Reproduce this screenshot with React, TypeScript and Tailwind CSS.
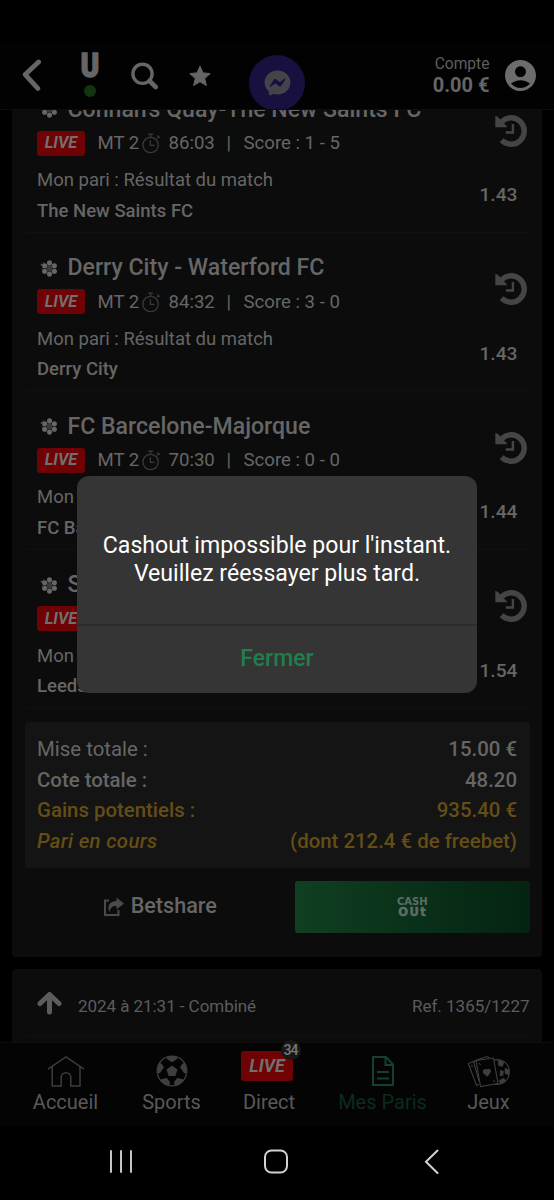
import type { ReactNode } from "react";

type Bet = { title: string; time: string; score: string; pick: string; odds: string };

const bets: Bet[] = [
  { title: "Connah's Quay-The New Saints FC", time: "86:03", score: "1 - 5", pick: "The New Saints FC", odds: "1.43" },
  { title: "Derry City - Waterford FC", time: "84:32", score: "3 - 0", pick: "Derry City", odds: "1.43" },
  { title: "FC Barcelone-Majorque", time: "70:30", score: "0 - 0", pick: "FC Barcelone", odds: "1.44" },
  { title: "Southampton-Leeds", time: "68:12", score: "0 - 1", pick: "Leeds", odds: "1.54" },
];

function BallIcon() {
  const dots = [0, 60, 120, 180, 240, 300].map((a) => {
    const r = ((a - 90) * Math.PI) / 180;
    return [9.5 + 5.6 * Math.cos(r), 8.5 + 5.6 * Math.sin(r)];
  });
  return (
    <svg className="block h-[17px] w-[18px]" viewBox="0 0 18 17">
      {dots.map(([x, y], i) => (
        <circle key={i} cx={x} cy={y} r="2.55" fill="#666" />
      ))}
      <circle cx="9.5" cy="8.5" r="3" fill="#3a3a3a" />
      <circle cx="1.6" cy="4.8" r="1" fill="#555" />
      <circle cx="3.6" cy="3.2" r="0.9" fill="#444" />
      <circle cx="2.4" cy="9" r="0.8" fill="#3a3a3a" />
    </svg>
  );
}

function StopwatchIcon() {
  return (
    <svg className="block h-[21px] w-[19px]" viewBox="0 0 19 21" fill="none" stroke="#3a3a3a" strokeWidth="1.3">
      <circle cx="8.6" cy="12" r="7.7" />
      <path d="M6 1.2h5.2M8.6 1.2v3M15 5.2l1.6-1.6M15.4 2.6l2.4 2.2M8.4 7.2v5.2h4.2" />
    </svg>
  );
}

function HistoryIcon() {
  return (
    <svg className="block h-[33px] w-[33px]" viewBox="0 0 33 33" fill="none">
      <path d="M6.8 7.6A13.2 13.2 0 1 1 6.6 26.200" stroke="#454545" strokeWidth="5.400" />
      <path d="M0.300 1.800L3 3l9 9.400V13.300H0.300Z" fill="#454545" />
      <path d="M17.900 10v8.500H10.800" stroke="#454545" strokeWidth="2.400" />
    </svg>
  );
}

function LiveBadge() {
  return (
    <span className="flex h-[25px] w-12 shrink-0 items-center justify-center rounded-[3px] bg-[#6e0204] text-[16.3px] font-bold italic leading-none text-[#707070]">
      LIVE
    </span>
  );
}

function BetItem({ bet }: { bet: Bet }) {
  return (
    <article className="flex h-[158.5px] justify-between border-b border-[#101010] pl-[12.5px]">
      <div className="pt-[20.6px]">
        <h2 className="flex h-[30px] items-center whitespace-nowrap text-[23.1px] font-medium leading-[30px]">
          <span className="ml-[3px] mr-[9.5px]">
            <BallIcon />
          </span>
          {bet.title}
        </h2>
        <div className="mt-[5.6px] flex h-[26px] items-center whitespace-nowrap text-[18.6px] leading-[26px]">
          <LiveBadge />
          <span className="ml-[12.5px] w-[44.5px]">MT 2</span>
          <span className="w-[26.5px] pt-[1px]">
            <StopwatchIcon />
          </span>
          <span className="w-[58px]">{bet.time}</span>
          <span className="w-[17px]">|</span>
          <span>Score : {bet.score}</span>
        </div>
        <p className="mt-[9px] text-[18.5px] leading-[30.7px]">Mon pari : Résultat du match</p>
        <p className="text-[18.5px] font-medium leading-[30.7px]">{bet.pick}</p>
      </div>
      <div className="flex flex-col items-end pr-[2px] pt-[39.5px]">
        <HistoryIcon />
        <span className="mr-[10px] mt-[33.7px] text-[19.2px] font-medium leading-[30px]">{bet.odds}</span>
      </div>
    </article>
  );
}

function SummaryRow({ label, value, className }: { label: string; value: string; className: string }) {
  return (
    <div className={`flex justify-between text-[20.4px] leading-[30.5px] ${className}`}>
      <span>{label}</span>
      <span className="font-medium not-italic tracking-normal">{value}</span>
    </div>
  );
}

function Header() {
  return (
    <header className="flex h-[68px] shrink-0 items-start overflow-hidden border-b border-[#0d0d0d] bg-[#020202] pl-[22px]">
      <svg className="mt-[17px] h-[33px] w-5" viewBox="0 0 20 33" fill="none" stroke="#666" strokeWidth="4.8" strokeLinecap="round" strokeLinejoin="round">
        <path d="M16.6 3L3.2 15.6L15.8 29.4" />
      </svg>
      <div className="ml-[33px] flex w-[30px] flex-col items-center pt-[7px]">
        <span className="scale-x-[0.84] text-[33px] font-black leading-[34px] text-[#666] [-webkit-text-stroke:1.600px_#666]">U</span>
        <span className="mt-[2px] size-[12px] rounded-full bg-[#11360f]" />
      </div>
      <svg className="ml-[25px] mt-[19px] h-[30px] w-[30px]" viewBox="0 0 30 30" fill="none" stroke="#666">
        <circle cx="12.500" cy="12.800" r="9.600" strokeWidth="3.400" />
        <path d="M19.500 19.800L25.700 26" strokeWidth="4.600" strokeLinecap="round" />
      </svg>
      <svg className="ml-[28px] mt-[22px] h-[24px] w-[24px]" viewBox="0 0 24 24">
        <path d="M12 2.200l3 6.700 7.200.7-5.500 4.800 1.700 7.100L12 17.800l-6.400 3.700 1.700-7.100L1.800 9.600 9 8.900z" fill="#666" stroke="#666" strokeWidth="1" strokeLinejoin="round" />
      </svg>
      <div className="ml-[37px] mt-[13px] flex size-14 shrink-0 items-center justify-center rounded-full bg-[#18103f]">
        <svg className="h-[26px] w-[27px]" viewBox="0 0 27 26">
          <path d="M13.5.6C6.2.6.6 5.9.6 12.5c0 3.500 1.500 6.500 3.800 8.600.3.300.4.600.4.900l.1 2.300c0 .8.8 1.300 1.500 1l2.500-1.100c.2-.1.500-.1.700-.1 1.200.3 2.500.5 3.900.5 7.300 0 12.900-5.300 12.900-12S20.800.6 13.500.6z" fill="#45434a" />
          <path d="M5.800 16l3.800-6c.6-1 1.900-1.200 2.800-.5l3 2.300c.3.200.6.200.9 0l4.100-3.100c.5-.4 1.300.2.9.8l-3.800 6c-.6 1-1.900 1.200-2.800.5l-3-2.300c-.3-.2-.6-.2-.9 0l-4.100 3.100c-.5.4-1.300-.2-.9-.8z" fill="#18103f" />
        </svg>
      </div>
      <div className="ml-auto mr-[15.500px] pt-[11.500px] text-right">
        <p className="text-[15.600px] leading-[20px] text-[#5e5e5e]">Compte</p>
        <p className="text-[20px] font-bold leading-[22px] text-[#666]">0.00 €</p>
      </div>
      <svg className="mr-[18px] mt-[18px] size-[31px]" viewBox="2 2 20 20" fill="#6c6c6c">
        <path d="M12 2C6.480 2 2 6.480 2 12s4.480 10 10 10 10-4.480 10-10S17.520 2 12 2zm0 4c1.930 0 3.500 1.570 3.500 3.500S13.930 13 12 13s-3.500-1.570-3.500-3.500S10.070 6 12 6zm0 14c-2.030 0-4.430-.82-6.140-2.880C7.550 15.800 9.680 15 12 15s4.450.8 6.140 2.120C16.430 19.180 14.030 20 12 20z" />
      </svg>
    </header>
  );
}

function Tab({ label, width, children, className = "" }: { label: string; width: string; children: ReactNode; className?: string }) {
  return (
    <div className={`flex flex-col items-center ${width} ${className}`}>
      <div className="flex h-[46px] items-end justify-center">{children}</div>
      <span className="whitespace-nowrap text-[20px] leading-[27px]">{label}</span>
    </div>
  );
}

function BottomNav() {
  return (
    <nav className="flex h-[84px] shrink-0 border-t border-[#0d0d0d] bg-[#040404] pl-3 text-[#595959]">
      <Tab label="Accueil" width="w-[107px]">
        <svg className="mb-[2px] h-[32px] w-[38px]" viewBox="0 0 38 32" fill="none" stroke="#3d3d3d" strokeWidth="1.500">
          <path d="M1 14.200L19 2l18 12.200M5.200 11.500V31h9V22.500a4.800 4.800 0 0 1 9.600 0V31h9.200V11.500" />
        </svg>
      </Tab>
      <Tab label="Sports" width="w-[105px]">
        <svg className="mb-[2px] size-[32px]" viewBox="0 0 32 32">
          <defs>
            <clipPath id="ball">
              <circle cx="16" cy="16" r="15" />
            </clipPath>
          </defs>
          <g clipPath="url(#ball)" fill="#3f3f3f">
            <path d="M16 10.500l5.500 4-2.100 6.400h-6.800l-2.100-6.400z" />
            <path d="M9.500 0h13l-1.700 4.200L16 7.200l-4.800-3zM0 7.500l5.500 1 2.500 3.700-4 5.800L0 19zM32 7.500l-5.500 1-2.500 3.700 4 5.800 4 1zM4.500 24.500l6-1.500 3.500 4-1 5H6zM27.500 24.500l-6-1.500-3.500 4 1 5h7z" />
          </g>
          <circle cx="16" cy="16" r="14.800" fill="none" stroke="#3f3f3f" strokeWidth="1.300" />
        </svg>
      </Tab>
      <Tab label="Direct" width="w-[90px]">
        <div className="relative mb-[8px] mr-1 flex h-[30px] w-[52px] items-center justify-center rounded-[3px] bg-[#6e0204] text-[17.800px] font-bold italic text-[#707070]">
          LIVE
          <span className="absolute -right-[8px] -top-[11px] flex size-[20px] items-center justify-center rounded-full bg-[#171717] pr-px text-[14px] font-medium not-italic leading-none tracking-[-0.900px] text-[#777]">
            34
          </span>
        </div>
      </Tab>
      <Tab label="Mes Paris" width="w-[137px]" className="text-[#0b2c1b]">
        <svg className="mb-[2px] h-[32px] w-[24px]" viewBox="0 0 24 32" fill="none" stroke="#173f2d" strokeWidth="2">
          <path d="M2 2h13l7 7.500V30H2zM14.500 2v8H22M6 17h12M6 23.500h12" />
        </svg>
      </Tab>
      <Tab label="Jeux" width="w-[75px]">
        <svg className="mb-[1px] h-[33px] w-[43px]" viewBox="0 0 43 33" stroke="#3f3f3f" strokeWidth="1.100">
          <circle cx="30" cy="17" r="12.400" fill="#040404" />
          <path d="M31 5l6 2-1.500 4.500-4-1zM38 13l4 2v5l-4-1.500zM33.500 15l3 1.500-.5 4-3 .5zM32 25.500l5-2.500 1.500 3-5 3z" fill="#3f3f3f" strokeWidth="0.500" />
          <path d="M12 29.500L9.500 30.500 1.300 8.500 15.500 3" fill="#040404" />
          <path d="M12 26L6.500 6.500 19.500 1.500l3 1.500" fill="none" />
          <path d="M9 5.500L26.500 3l4.500 25.500L13.500 31.500z" fill="#040404" />
          <path d="M20.200 20.800c-2.500-1.700-3.700-2.900-3.800-4.200-.1-2 2.300-2.700 3.400-.9.600-2 3.300-1.900 3.500.1.100 1.500-1 3.100-3.100 5z" fill="#3f3f3f" />
          <path d="M12 8l1.500 2M4.500 10l1 2M26.500 25l1 2" />
        </svg>
      </Tab>
    </nav>
  );
}

function SystemBar() {
  return (
    <footer className="flex h-[74px] shrink-0 items-start bg-black pt-[22px]">
      <svg className="ml-[109px] h-[26px] w-[24px]" viewBox="0 0 24 26" stroke="#c4c4c4" strokeWidth="2" strokeLinecap="round">
        <path d="M2 3v21M12 3v21M22 3v21" />
      </svg>
      <svg className="ml-[130px] h-[26px] w-[26px]" viewBox="0 0 26 26" fill="none" stroke="#d2d2d2" strokeWidth="2">
        <rect x="2" y="2.500" width="22" height="22" rx="6.500" />
      </svg>
      <svg className="ml-[134px] h-[26px] w-[18px]" viewBox="0 0 18 26" fill="none" stroke="#d2d2d2" strokeWidth="2" strokeLinecap="round">
        <path d="M14.500 2.500L3 13.800l11.500 11.200" />
      </svg>
    </footer>
  );
}

function Dialog() {
  return (
    <div className="absolute left-[77px] top-[475.5px] flex h-[217px] w-[400px] flex-col overflow-hidden rounded-[12px] bg-[#353535]">
      <p className="flex-1 pt-[56px] text-center text-[23.1px] leading-[28px] text-white">
        Cashout impossible pour l'instant.
        <br />
        Veuillez réessayer plus tard.
      </p>
      <button className="h-[68.5px] border-t-2 border-[#2d2d2d] text-[23px] font-medium text-[#1e7f4c]">Fermer</button>
    </div>
  );
}

export default function App() {
  return (
    <div className="relative flex h-[1200px] w-[554px] flex-col overflow-hidden bg-black font-['Roboto',sans-serif] text-[#666]">
      <div className="h-[42px] shrink-0 bg-black" />
      <Header />
      <main className="min-h-0 flex-1 overflow-hidden px-3">
        <section className="-mt-[36px] h-[883px] rounded-b-[4px] bg-[#0c0c0c] px-[12.500px]">
          {bets.map((bet) => (
            <BetItem key={bet.title} bet={bet} />
          ))}
          <div className="mt-[13.700px] h-[146px] rounded-[3px] bg-[#141414] px-[12.500px] pt-[12.500px]">
            <SummaryRow label="Mise totale :" value="15.00 €" className="text-[#666]" />
            <SummaryRow label="Cote totale :" value="48.20" className="font-medium text-[#666]" />
            <SummaryRow label="Gains potentiels :" value="935.40 €" className="font-medium text-[#644e16]" />
            <SummaryRow label="Pari en cours" value="(dont 212.4 € de freebet)" className="font-medium italic tracking-[0.300px] text-[#644e16]" />
          </div>
          <div className="mt-[13px] flex h-[52px]">
            <div className="flex w-[270.500px] items-center justify-center text-[21.600px] font-medium">
              <svg className="mr-[7px] mt-[1px] h-[20px] w-[21px]" viewBox="0 0 21 20">
                <path d="M6 3.500H2V18h13.500v-5" fill="none" stroke="#4a4a4a" strokeWidth="2" />
                <path d="M13.500 0.500L21 6.500l-7.500 6V9C9.500 8.800 7.500 10.500 6.500 15 3.800 9.500 6.500 4.200 13.500 4z" fill="#4a4a4a" />
              </svg>
              Betshare
            </div>
            <button className="flex flex-1 flex-col items-center justify-center rounded-[3px] bg-linear-to-r from-[#113f22] to-[#042411] font-['DejaVu_Sans',sans-serif] font-bold text-[#5e6e64]">
              <span className="text-[10px] leading-[10px]">CASH</span>
              <span className="-mr-px text-[11.500px] leading-[10px] tracking-[1.500px] [-webkit-text-stroke:0.500px_#5e6e64]">OUt</span>
            </button>
          </div>
        </section>
        <section className="mt-3 h-[90px] rounded-t-[4px] bg-[#0c0c0c] px-[12.500px]">
          <div className="flex h-[67px] items-center border-b border-[#101010] pl-[12.500px] pt-[10px] text-[17px] text-[#5c5c5c]">
            <svg className="-mt-[8px] h-[24px] w-[25px]" viewBox="0 0 25 24" fill="none" stroke="#5c5c5c" strokeWidth="5" strokeLinejoin="round" strokeLinecap="round">
              <path d="M3 12.500L12.500 3.500l9.500 9" />
              <path d="M12.500 5v16" />
            </svg>
            <span className="ml-4 tracking-[-0.050px]">2024 à 21:31 - Combiné</span>
            <span className="ml-auto">Ref. 1365/1227</span>
          </div>
        </section>
      </main>
      <BottomNav />
      <SystemBar />
      <Dialog />
    </div>
  );
}
